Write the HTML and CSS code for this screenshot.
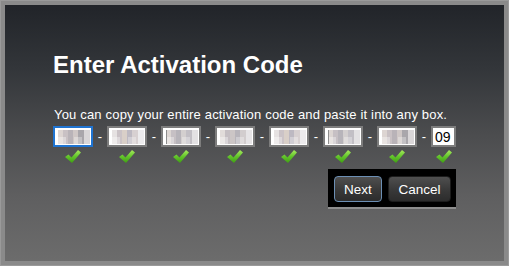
FILE: index.html
```html
<!DOCTYPE html>
<html>
<head>
<meta charset="utf-8">
<link rel="stylesheet" href="styles.css">
</head>
<body>
<div class="frame">
  <div class="panel">
    <h1 class="title">Enter Activation Code</h1>
    <p class="hint">You can copy your entire activation code and paste it into any box.</p>
    <div class="codes">
      <div class="cell"><div class="box active"><span class="mosaic m1"></span></div><svg class="check" viewBox="0 0 16 13"><use href="#ck"/></svg></div>
      <span class="dash">-</span>
      <div class="cell"><div class="box"><span class="mosaic m2"></span></div><svg class="check" viewBox="0 0 16 13"><use href="#ck"/></svg></div>
      <span class="dash">-</span>
      <div class="cell"><div class="box"><span class="mosaic m3"></span></div><svg class="check" viewBox="0 0 16 13"><use href="#ck"/></svg></div>
      <span class="dash">-</span>
      <div class="cell"><div class="box"><span class="mosaic m4"></span></div><svg class="check" viewBox="0 0 16 13"><use href="#ck"/></svg></div>
      <span class="dash">-</span>
      <div class="cell"><div class="box"><span class="mosaic m2"></span></div><svg class="check" viewBox="0 0 16 13"><use href="#ck"/></svg></div>
      <span class="dash">-</span>
      <div class="cell"><div class="box"><span class="mosaic m3"></span></div><svg class="check" viewBox="0 0 16 13"><use href="#ck"/></svg></div>
      <span class="dash">-</span>
      <div class="cell"><div class="box"><span class="mosaic m1"></span></div><svg class="check" viewBox="0 0 16 13"><use href="#ck"/></svg></div>
      <span class="dash">-</span>
      <div class="cell"><div class="box small">09</div><svg class="check" viewBox="0 0 16 13"><use href="#ck"/></svg></div>
    </div>
    <div class="actions">
      <div class="btnbar">
        <button class="btn primary">Next</button>
        <button class="btn">Cancel</button>
      </div>
    </div>
  </div>
</div>
<svg width="0" height="0" class="defs">
  <defs>
    <linearGradient id="g" x1="0" y1="0" x2="0" y2="1">
      <stop offset="0" stop-color="#a8ea5e"/>
      <stop offset="0.5" stop-color="#62c52a"/>
      <stop offset="1" stop-color="#3f9e14"/>
    </linearGradient>
    <symbol id="ck" viewBox="0 0 16 13">
      <path d="M0 7 L3.5 4.5 L6.5 7.5 L13 0 L16 2.5 L7 13 Z" fill="url(#g)"/>
    </symbol>
  </defs>
</svg>
</body>
</html>
```
FILE: styles.css
```css
html, body {
  margin: 0;
  padding: 0;
}
body {
  width: 509px;
  height: 266px;
  font-family: "Liberation Sans", Arial, sans-serif;
  overflow: hidden;
}
.defs {
  position: absolute;
}
.frame {
  box-sizing: border-box;
  width: 509px;
  height: 266px;
  border: 5px solid #8a8a8a;
  outline: 1px solid #9a9a9a;
  outline-offset: -1px;
}
.panel {
  box-sizing: border-box;
  height: 100%;
  background: linear-gradient(to bottom, #212429 0%, #33363a 25%, #4b4c4e 50%, #5f5f60 75%, #6c6c6c 100%);
  padding: 46px 0 0 48px;
  color: #fff;
}
.title {
  margin: 0;
  font-size: 24px;
  line-height: 28px;
  font-weight: bold;
}
.hint {
  margin: 28px 0 0 1px;
  font-size: 13px;
  line-height: 15px;
  letter-spacing: 0.18px;
}
.codes {
  display: flex;
  align-items: flex-start;
  margin-top: 4px;
}
.cell {
  display: flex;
  flex-direction: column;
  align-items: center;
}
.box {
  box-sizing: border-box;
  width: 40px;
  height: 21px;
  background: #fff;
  border: 2px solid #7d7d7d;
  display: flex;
  align-items: center;
  padding-left: 3px;
}
.box.active {
  border-color: #1f74d2;
}
.box.small {
  width: 25px;
  color: #000;
  font-size: 14px;
  padding-left: 2px;
}
.mosaic {
  display: block;
  width: 32px;
  height: 14px;
  background:
    linear-gradient(to right, rgba(255,255,255,0.35) 0 25%, transparent 25% 50%, rgba(255,255,255,0.3) 50% 75%, transparent 75%) 0 7px / 100% 7px no-repeat,
    linear-gradient(to right, #ddd5d2 0 5px, #c9c1c4 5px 10px, #b9b3b8 10px 15px, #cfc7c6 15px 20px, #a9a6ab 20px 26px, #d9d6d8 26px);
}
.m2 {
  background:
    linear-gradient(to right, rgba(255,255,255,0.35) 0 25%, transparent 25% 50%, rgba(255,255,255,0.3) 50% 75%, transparent 75%) 0 7px / 100% 7px no-repeat,
    linear-gradient(to right, #e6e2e2 0 5px, #cbc3c7 5px 10px, #d9cfc8 10px 15px, #bdb9c2 15px 20px, #d7d0d1 20px 26px, #ecebed 26px);
}
.m3 {
  background:
    linear-gradient(to right, #8d8d8d 0 1px, transparent 1px),
    linear-gradient(to right, rgba(255,255,255,0.35) 0 25%, transparent 25% 50%, rgba(255,255,255,0.3) 50% 75%, transparent 75%) 0 7px / 100% 7px no-repeat,
    linear-gradient(to right, #dcd6d3 0 5px, #c6c0c4 5px 10px, #b7b4ba 10px 15px, #d3cfcf 15px 20px, #c2bfc5 20px 26px, #e3e1e3 26px);
}
.m4 {
  background:
    linear-gradient(to right, rgba(255,255,255,0.35) 0 25%, transparent 25% 50%, rgba(255,255,255,0.3) 50% 75%, transparent 75%) 0 7px / 100% 7px no-repeat,
    linear-gradient(to right, #e1dcda 0 5px, #c5bfc3 5px 10px, #ccc6c6 10px 15px, #b8b5bb 15px 20px, #d2cdce 20px 26px, #e6e4e6 26px);
}
.dash {
  width: 14px;
  text-align: center;
  font-size: 13px;
  line-height: 21px;
  color: #fff;
}
.check {
  width: 16px;
  height: 13px;
  margin-top: 3px;
}
.actions {
  display: flex;
  justify-content: flex-end;
  padding-right: 48px;
  margin-top: 6px;
}
.btnbar {
  display: flex;
  gap: 6px;
  background: #000;
  padding: 7px 5px 5px 6px;
  border-bottom: 2px solid #8e8e8e;
}
.btn {
  height: 26px;
  border-radius: 4px;
  font-family: "Liberation Sans", Arial, sans-serif;
  font-size: 13.5px;
  color: #fff;
  border: 1px solid #1c1c1c;
  background: linear-gradient(to bottom, #4f4f4f 0%, #3a3a3a 50%, #2c2c2c 100%);
  padding: 0;
  width: 63px;
}
.btn.primary {
  width: 48px;
  border-color: #6c8fb4;
}
```
